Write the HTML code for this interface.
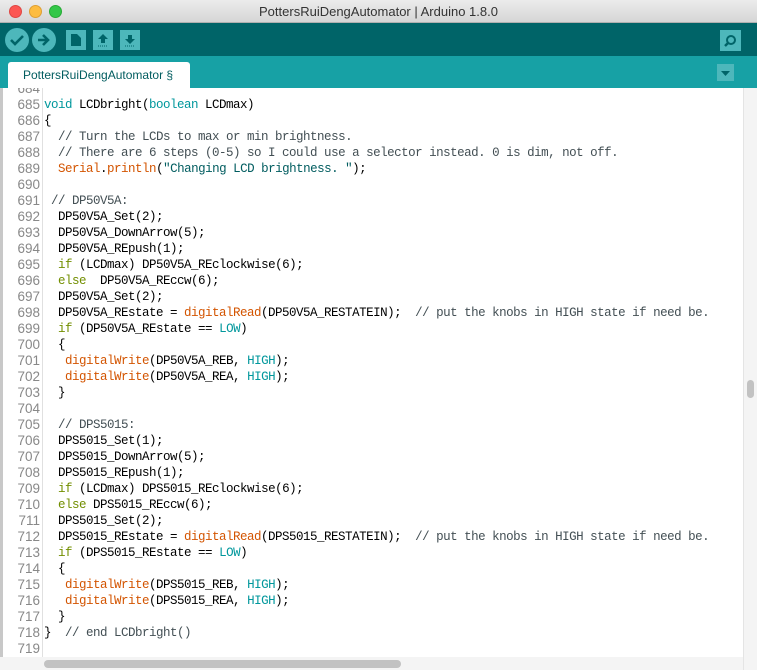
<!DOCTYPE html>
<html><head><meta charset="utf-8"><style>
*{margin:0;padding:0;box-sizing:border-box}
body{width:757px;height:670px;overflow:hidden;background:#fff;font-family:"Liberation Sans",sans-serif;position:relative}
#title{position:absolute;left:0;top:0;width:757px;height:23px;background:linear-gradient(#ececec,#d6d6d6);border-bottom:1px solid #b0b0b0;text-align:center;font-size:13px;line-height:23px;color:#333}
.dot{position:absolute;top:5px;width:13px;height:13px;border-radius:50%}
#tool{position:absolute;left:0;top:23px;width:757px;height:33px;background:#006468}
#tabs{position:absolute;left:0;top:56px;width:757px;height:32px;background:#17a1a5}
.b{position:absolute;background:#4db7bb}
#tab{position:absolute;left:8px;top:62px;width:182px;height:26px;background:#fff;border-radius:3px 3px 0 0;color:#005c5f;font-size:12px;line-height:26px;padding-left:15px}
#ed{position:absolute;left:3px;top:88px;width:740px;height:569px;background:#fff;overflow:hidden}
#gut{position:absolute;left:0;top:0;width:40px;height:569px;border-right:1px solid #e0e0e0}
pre{font-family:"Liberation Mono",monospace;font-size:12.5px;letter-spacing:-0.5px;line-height:16px;position:absolute;top:-7px}
#nums{left:0;width:37px;text-align:right;color:#888;font-family:"Liberation Sans",sans-serif;font-size:13.5px;letter-spacing:0}
#code{left:41px;color:#000}
.k{color:#00979c}.f{color:#d35400}.c{color:#434f54}.s{color:#005c5f}.i{color:#728e00}
#vs{position:absolute;left:743px;top:88px;width:14px;height:582px;background:#f4f4f4;border-left:1px solid #e4e4e4}
#hs{position:absolute;left:0;top:657px;width:743px;height:13px;background:#f4f4f4}
</style></head><body>
<div id="title">PottersRuiDengAutomator | Arduino 1.8.0
<div class="dot" style="left:9px;background:#fc5753;border:1px solid #df4744"></div>
<div class="dot" style="left:29px;background:#fdbc40;border:1px solid #de9f34"></div>
<div class="dot" style="left:49px;background:#33c748;border:1px solid #27aa35"></div>
</div>
<div id="tool">
<div class="b" style="left:5px;top:5px;width:24px;height:24px;border-radius:50%"></div>
<div class="b" style="left:32px;top:5px;width:24px;height:24px;border-radius:50%"></div>
<div class="b" style="left:66px;top:7px;width:20px;height:20px"></div>
<div class="b" style="left:93px;top:7px;width:20px;height:20px"></div>
<div class="b" style="left:120px;top:7px;width:20px;height:20px"></div>
<div class="b" style="left:720px;top:7px;width:21px;height:21px"></div>
<svg style="position:absolute;left:0;top:0" width="757" height="33">
<path d="M11 17l4 4 8-8" stroke="#006468" stroke-width="2.6" fill="none"/>
<path d="M38 17h9M43 12l5 5-5 5" stroke="#006468" stroke-width="2.6" fill="none"/>
<path d="M71 11h6l4 4v8h-10z" fill="#006468"/>
<path d="M103 11l-5 5h3v4h4v-4h3z" fill="#006468"/><path d="M98 23h10" stroke="#006468" stroke-dasharray="1 1"/>
<path d="M130 21l-5-5h3v-4h4v4h3z" fill="#006468"/><path d="M125 23h10" stroke="#006468" stroke-dasharray="1 1"/>
<circle cx="731" cy="17" r="4" stroke="#006468" stroke-width="2" fill="none"/><path d="M728 20l-3 3" stroke="#006468" stroke-width="2.5"/>
</svg>
</div>
<div id="tabs"><div class="b" style="left:717px;top:8px;width:17px;height:17px"></div>
<svg style="position:absolute;left:717px;top:8px" width="17" height="17"><path d="M4 7h9l-4.5 5z" fill="#006468"/></svg></div>
<div id="tab">PottersRuiDengAutomator §</div>
<div id="ed"><div id="gut"></div>
<pre id="nums">684
685
686
687
688
689
690
691
692
693
694
695
696
697
698
699
700
701
702
703
704
705
706
707
708
709
710
711
712
713
714
715
716
717
718
719</pre>
<pre id="code">

<span class="k">void</span> LCDbright(<span class="k">boolean</span> LCDmax)
{
  <span class="c">// Turn the LCDs to max or min brightness.</span>
  <span class="c">// There are 6 steps (0-5) so I could use a selector instead. 0 is dim, not off.</span>
  <span class="f">Serial</span>.<span class="f">println</span>(<span class="s">"Changing LCD brightness. "</span>);

 <span class="c">// DP50V5A:</span>
  DP50V5A_Set(2);
  DP50V5A_DownArrow(5);
  DP50V5A_REpush(1);
  <span class="i">if</span> (LCDmax) DP50V5A_REclockwise(6);
  <span class="i">else</span>  DP50V5A_REccw(6);
  DP50V5A_Set(2);
  DP50V5A_REstate = <span class="f">digitalRead</span>(DP50V5A_RESTATEIN);  <span class="c">// put the knobs in HIGH state if need be.</span>
  <span class="i">if</span> (DP50V5A_REstate == <span class="k">LOW</span>)
  {
   <span class="f">digitalWrite</span>(DP50V5A_REB, <span class="k">HIGH</span>);
   <span class="f">digitalWrite</span>(DP50V5A_REA, <span class="k">HIGH</span>);
  }

  <span class="c">// DPS5015:</span>
  DPS5015_Set(1);
  DPS5015_DownArrow(5);
  DPS5015_REpush(1);
  <span class="i">if</span> (LCDmax) DPS5015_REclockwise(6);
  <span class="i">else</span> DPS5015_REccw(6);
  DPS5015_Set(2);
  DPS5015_REstate = <span class="f">digitalRead</span>(DPS5015_RESTATEIN);  <span class="c">// put the knobs in HIGH state if need be.</span>
  <span class="i">if</span> (DPS5015_REstate == <span class="k">LOW</span>)
  {
   <span class="f">digitalWrite</span>(DPS5015_REB, <span class="k">HIGH</span>);
   <span class="f">digitalWrite</span>(DPS5015_REA, <span class="k">HIGH</span>);
  }
}  <span class="c">// end LCDbright()</span>
</pre></div>
<div style="position:absolute;left:0;top:88px;width:3px;height:582px;background:#c8c8c8"></div>
<div id="vs"><div style="position:absolute;left:3px;top:292px;width:7px;height:18px;border-radius:4px;background:#c2c2c2"></div></div>
<div id="hs"><div style="position:absolute;left:44px;top:3px;width:357px;height:8px;border-radius:4px;background:#c2c2c2"></div></div>
</body></html>
